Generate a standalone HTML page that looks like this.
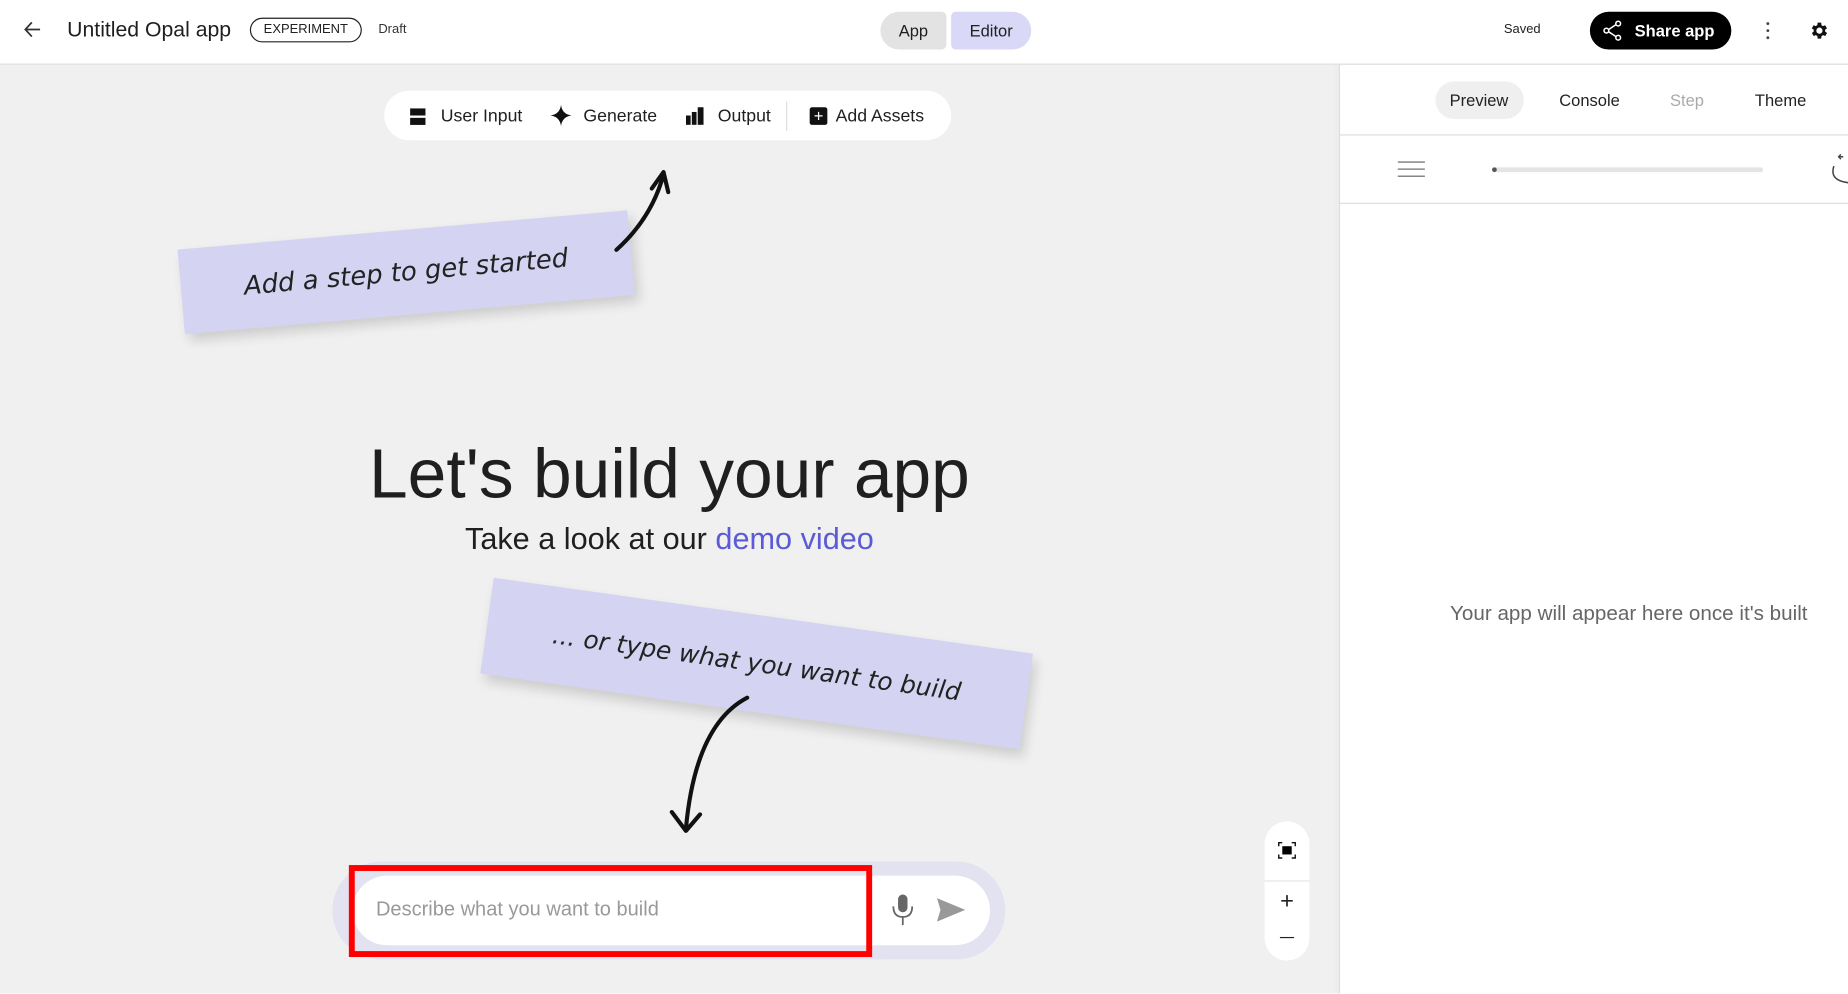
<!DOCTYPE html>
<html><head><meta charset="utf-8"><style>
html,body{margin:0;padding:0;width:1848px;height:993px;overflow:hidden;background:#fff;font-family:"Liberation Sans",sans-serif;}
#w{position:absolute;left:0;top:0;width:1568px;height:843px;transform:scale(1.17857);transform-origin:0 0;}
.a{position:absolute;}
.note{position:absolute;background:#d4d4f2;box-shadow:4px 6px 10px rgba(0,0,0,.15);font-style:italic;font-family:"DejaVu Sans","Liberation Sans",sans-serif;color:#222;display:flex;align-items:center;justify-content:center;}
.tb{position:absolute;top:90px;font-size:15px;color:#1f1f1f;}
</style></head><body><div id="w">
<div class="a" style="left:0;top:0;width:1568px;height:55px;background:#fff;border-bottom:1px solid #ddd;box-sizing:border-box"></div>
<svg class="a" style="left:19px;top:16px" width="18" height="18" viewBox="0 0 18 18"><path d="M15 9H3M8 3L2.5 9 8 15" fill="none" stroke="#333" stroke-width="1.5"/></svg>
<div class="a" style="left:57px;top:15px;font-size:18px;color:#1f1f1f">Untitled Opal app</div>
<div class="a" style="left:212px;top:15px;width:95px;height:21px;border:1.3px solid #222;border-radius:11px;box-sizing:border-box;font-size:11px;text-align:center;line-height:19px;color:#222">EXPERIMENT</div>
<div class="a" style="left:321px;top:19px;font-size:11px;color:#333">Draft</div>
<div class="a" style="left:747px;top:10px;width:56px;height:32px;background:#e3e3e3;border-radius:16px 4px 4px 16px;font-size:14px;text-align:center;line-height:32px;color:#1f1f1f">App</div>
<div class="a" style="left:807px;top:10px;width:68px;height:32px;background:#d9d9f7;border-radius:4px 16px 16px 4px;font-size:14px;text-align:center;line-height:32px;color:#1f1f1f">Editor</div>
<div class="a" style="left:1276px;top:19px;font-size:11px;color:#222">Saved</div>
<div class="a" style="left:1349px;top:10px;width:120px;height:32px;background:#000;border-radius:16px;color:#fff;font-size:14px;font-weight:bold;line-height:32px;box-sizing:border-box;padding-left:38px">Share app</div>
<svg class="a" style="left:1360px;top:17px" width="17" height="18" viewBox="0 0 17 18"><circle cx="13" cy="3" r="2" fill="none" stroke="#fff" stroke-width="1.3"/><circle cx="3" cy="9" r="2" fill="none" stroke="#fff" stroke-width="1.3"/><circle cx="13" cy="15" r="2" fill="none" stroke="#fff" stroke-width="1.3"/><path d="M5 8L11 4M5 10L11 14" stroke="#fff" stroke-width="1.3"/></svg>
<svg class="a" style="left:1497px;top:18px" width="6" height="16"><circle cx="3" cy="2" r="1.2" fill="#444"/><circle cx="3" cy="8" r="1.2" fill="#444"/><circle cx="3" cy="14" r="1.2" fill="#444"/></svg>
<svg class="a" style="left:1534px;top:17px" width="18" height="18" viewBox="0 0 24 24"><path fill="#111" d="M19.4 13a7.5 7.5 0 000-2l2.1-1.6-2-3.5-2.5 1a7 7 0 00-1.7-1L15 3h-4l-.4 2.9a7 7 0 00-1.7 1l-2.5-1-2 3.5L6.6 11a7.5 7.5 0 000 2l-2.1 1.6 2 3.5 2.5-1a7 7 0 001.7 1L11 21h4l.4-2.9a7 7 0 001.7-1l2.5 1 2-3.5zM13 15.5a3.5 3.5 0 110-7 3.5 3.5 0 010 7z"/></svg>
<div class="a" style="left:0;top:55px;width:1136px;height:788px;background:#f0f0f0"></div>
<div class="a" style="left:326px;top:77px;width:481px;height:42px;background:#fff;border-radius:21px"></div>
<div class="a" style="left:348px;top:92px;width:13px;height:6px;background:#111"></div><div class="a" style="left:348px;top:100px;width:13px;height:6px;background:#111"></div>
<div class="tb" style="left:374px">User Input</div>
<svg class="a" style="left:467px;top:89px" width="18" height="18" viewBox="0 0 18 18"><path d="M9 0Q10 8 18 9Q10 10 9 18Q8 10 0 9Q8 8 9 0Z" fill="#111"/></svg>
<div class="tb" style="left:495px">Generate</div>
<svg class="a" style="left:582px;top:90px" width="15" height="16"><rect x="0" y="8" width="4" height="8" fill="#111"/><rect x="5" y="5" width="4" height="11" fill="#111"/><rect x="10" y="1" width="5" height="15" fill="#111"/></svg>
<div class="tb" style="left:609px">Output</div>
<div class="a" style="left:667px;top:86px;width:1px;height:25px;background:#ddd"></div>
<div class="a" style="left:687px;top:91px;width:15px;height:15px;background:#111;border-radius:2px;color:#fff;font-size:14px;line-height:15px;text-align:center">+</div>
<div class="tb" style="left:709px">Add Assets</div>
<div class="note" style="left:153px;top:195px;width:383px;height:72px;transform:rotate(-5deg);font-size:22px">Add a step to get started</div>
<svg class="a" style="left:515px;top:140px" width="60" height="80"><path d="M8 72Q38 45 48 8" fill="none" stroke="#111" stroke-width="3.5" stroke-linecap="round"/><path d="M38 20L48 6 52 23" fill="none" stroke="#111" stroke-width="3.5" stroke-linecap="round" stroke-linejoin="round"/></svg>
<div class="a" style="left:0;top:368px;width:1136px;text-align:center;font-size:59px;color:#1f1f1f">Let's build your app</div>
<div class="a" style="left:0;top:442px;width:1136px;text-align:center;font-size:26px;color:#1f1f1f">Take a look at our <span style="color:#5b5bd6">demo video</span></div>
<div class="note" style="left:411px;top:522px;width:462px;height:82px;transform:rotate(8deg);font-size:21px">... or type what you want to build</div>
<svg class="a" style="left:560px;top:585px" width="90" height="130"><path d="M74 7Q30 30 22 118" fill="none" stroke="#111" stroke-width="3.5" stroke-linecap="round"/><path d="M10 104L22 120 34 106" fill="none" stroke="#111" stroke-width="3.5" stroke-linecap="round" stroke-linejoin="round"/></svg>
<div class="a" style="left:282px;top:731px;width:571px;height:83px;background:#e2e2f0;border-radius:42px"></div>
<div class="a" style="left:299px;top:743px;width:541px;height:59px;background:#fff;border-radius:30px"></div>
<div class="a" style="left:296px;top:734px;width:444px;height:78px;border:5px solid #f00;box-sizing:border-box"></div>
<div class="a" style="left:319px;top:762px;font-size:17px;color:#999">Describe what you want to build</div>
<svg class="a" style="left:756px;top:758px" width="20" height="28"><rect x="6" y="1" width="8" height="15" rx="4" fill="#666"/><path d="M2 11Q2 20 10 20Q18 20 18 11M10 20V27" fill="none" stroke="#666" stroke-width="1.5"/></svg>
<svg class="a" style="left:795px;top:762px" width="24" height="20"><path d="M0 0L24 10 0 20 3 10Z" fill="#999"/></svg>
<div class="a" style="left:1073px;top:697px;width:38px;height:118px;background:#fff;border-radius:19px"></div>
<div class="a" style="left:1073px;top:747px;width:38px;height:1px;background:#e4e4e4"></div>
<svg class="a" style="left:1084px;top:714px" width="16" height="15"><path d="M1 4V1H4M12 1H15V4M15 11V14H12M4 14H1V11" fill="none" stroke="#111" stroke-width="1.2"/><rect x="4" y="4" width="8" height="7" fill="#000"/></svg>
<div class="a" style="left:1073px;top:754px;width:38px;text-align:center;font-size:20px;color:#222">+</div>
<div class="a" style="left:1086px;top:795px;width:12px;height:1.3px;background:#222"></div>
<div class="a" style="left:1136px;top:55px;width:1px;height:788px;background:#ddd;box-shadow:-2px 0 4px rgba(0,0,0,.08)"></div>
<div class="a" style="left:1137px;top:114px;width:431px;height:1px;background:#ddd"></div>
<div class="a" style="left:1137px;top:172px;width:431px;height:1px;background:#ddd"></div>
<div class="a" style="left:1218px;top:69px;width:75px;height:32px;background:#efefef;border-radius:16px"></div>
<div class="a" style="left:1230px;top:77px;font-size:14px;color:#222">Preview</div>
<div class="a" style="left:1323px;top:77px;font-size:14px;color:#222">Console</div>
<div class="a" style="left:1417px;top:77px;font-size:14px;color:#aaa">Step</div>
<div class="a" style="left:1489px;top:77px;font-size:14px;color:#222">Theme</div>
<div class="a" style="left:1186px;top:137px;width:23px;height:1.3px;background:#666"></div>
<div class="a" style="left:1186px;top:143px;width:23px;height:1.3px;background:#666"></div>
<div class="a" style="left:1186px;top:149px;width:23px;height:1.3px;background:#666"></div>
<div class="a" style="left:1266px;top:142px;width:230px;height:4px;background:#e4e4e4;border-radius:2px"></div>
<div class="a" style="left:1266px;top:142px;width:4px;height:4px;background:#555;border-radius:2px"></div>
<svg class="a" style="left:1550px;top:127px" width="18" height="30"><path d="M14 6H10M12 4L10 6 12 8" fill="none" stroke="#444" stroke-width="1.2"/><path d="M6 14Q2 26 18 28" fill="none" stroke="#444" stroke-width="1.3"/></svg>
<div class="a" style="left:1137px;top:510px;width:490px;text-align:center;font-size:17.5px;color:#666">Your app will appear here once it's built</div>
</div></body></html>
